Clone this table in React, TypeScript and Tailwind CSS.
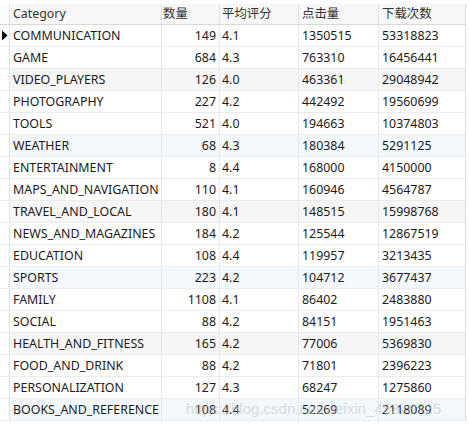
const rows: [string, number, string, number, number][] = [
  ["COMMUNICATION", 149, "4.1", 1350515, 53318823],
  ["GAME", 684, "4.3", 763310, 16456441],
  ["VIDEO_PLAYERS", 126, "4.0", 463361, 29048942],
  ["PHOTOGRAPHY", 227, "4.2", 442492, 19560699],
  ["TOOLS", 521, "4.0", 194663, 10374803],
  ["WEATHER", 68, "4.3", 180384, 5291125],
  ["ENTERTAINMENT", 8, "4.4", 168000, 4150000],
  ["MAPS_AND_NAVIGATION", 110, "4.1", 160946, 4564787],
  ["TRAVEL_AND_LOCAL", 180, "4.1", 148515, 15998768],
  ["NEWS_AND_MAGAZINES", 184, "4.2", 125544, 12867519],
  ["EDUCATION", 108, "4.4", 119957, 3213435],
  ["SPORTS", 223, "4.2", 104712, 3677437],
  ["FAMILY", 1108, "4.1", 86402, 2483880],
  ["SOCIAL", 88, "4.2", 84151, 1951463],
  ["HEALTH_AND_FITNESS", 165, "4.2", 77006, 5369830],
  ["FOOD_AND_DRINK", 88, "4.2", 71801, 2396223],
  ["PERSONALIZATION", 127, "4.3", 68247, 1275860],
  ["BOOKS_AND_REFERENCE", 108, "4.4", 52269, 2118089],
];

// every third row is tinted, alternating gray / blue
const rowBg = (i: number) => {
  if ((i + 1) % 6 === 0) return "bg-[#f3f8fd]";
  if ((i + 1) % 3 === 0) return "bg-[#f6f6f6]";
  return "bg-white";
};

export default function App() {
  return (
    <div
      className="relative w-[469px] h-[425px] bg-white pt-[4px] text-[12.4px] leading-none text-[#1b1b1b] overflow-hidden"
      style={{ fontFamily: '"Noto Sans", "Noto Sans CJK SC", sans-serif' }}
    >
      <div className="w-[466px] border-r border-[#dcdcdc]">
        {/* Header */}
        <div className="flex h-[21px] border-b border-[#d9d9d9] text-[#333]">
          <div className="w-[10px] shrink-0 border-r border-[#e2e2e2] bg-[#fbfbfb]" />
          <div className="w-[152px] shrink-0 flex items-center pl-[3px] border-r border-[#e2e2e2] bg-[#f7f7f7]">
            Category
          </div>
          <div className="w-[58px] shrink-0 flex items-center pl-[1px] border-r border-[#e2e2e2] bg-[#f7f7f7]">
            数量
          </div>
          <div className="w-[79px] shrink-0 flex items-center pl-[2px] border-r border-[#e2e2e2] bg-[#f7f7f7]">
            平均评分
          </div>
          <div className="w-[80px] shrink-0 flex items-center pl-[3px] border-r border-[#e2e2e2] bg-[#f7f7f7]">
            点击量
          </div>
          <div className="flex-1 flex items-center pl-[3px] bg-[#f7f7f7]">下载次数</div>
        </div>

        {/* Rows */}
        {rows.map(([cat, count, rating, clicks, downloads], i) => (
          <div key={cat} className={`flex h-[22px] border-b border-[#ececec] ${rowBg(i)}`}>
            <div className="w-[10px] shrink-0 flex items-center justify-center border-r border-[#e2e2e2] bg-white">
              {i === 0 && (
                <svg width="7" height="11" viewBox="0 0 7 11">
                  <path d="M1 0.5 L6.5 5.5 L1 10.5 Z" fill="#000" />
                </svg>
              )}
            </div>
            <div className="w-[152px] shrink-0 flex items-center pl-[3px] pt-[1px] border-r border-[#e8e8e8] whitespace-nowrap overflow-hidden">
              {cat}
            </div>
            <div className="w-[58px] shrink-0 flex items-center justify-end pr-[3px] pt-[1px] border-r border-[#e8e8e8]">
              {count}
            </div>
            <div className="w-[79px] shrink-0 flex items-center pl-[2px] pt-[1px] border-r border-[#e8e8e8]">
              {rating}
            </div>
            <div className="w-[80px] shrink-0 flex items-center pl-[3px] pt-[1px] border-r border-[#e8e8e8]">
              {clicks}
            </div>
            <div className="flex-1 flex items-center pl-[3px] pt-[1px]">{downloads}</div>
          </div>
        ))}
      </div>

      {/* watermark */}
      <div
        className="absolute left-[186px] top-[401px] text-[15px] text-[#c8c8c8] opacity-60 whitespace-nowrap pointer-events-none"
        style={{ fontFamily: '"Liberation Sans", Arial, sans-serif' }}
      >
        https://blog.csdn.net/weixin_45378725
      </div>
    </div>
  );
}
